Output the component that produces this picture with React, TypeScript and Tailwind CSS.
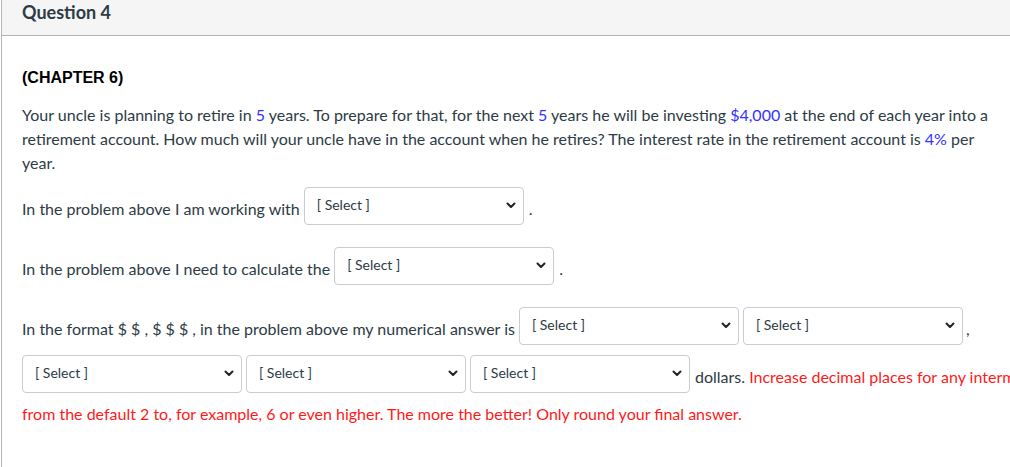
import React from 'react'

const ink = 'text-[#2d3b45]'

const SelectBox = (): React.ReactNode => (
  <div className="flex h-[38px] w-[220px] shrink-0 items-center justify-between rounded-[4px] border border-[#c7cdd1] bg-white pr-[7px] pl-[12px] text-[14px] leading-5 text-[#2d3b45]">
    <span className="-mt-[2px]">[ Select ]</span>
    <svg width="10" height="7" viewBox="0 0 10 7" className="-mt-[1px]">
      <path d="M1.5 1.5 5 5l3.5-3.5" fill="none" stroke="#222" strokeWidth="2" strokeLinecap="round" strokeLinejoin="round" />
    </svg>
  </div>
)

const Blue = ({ children }: { children: React.ReactNode }): React.ReactNode => (
  <span className="text-[#3333ff]">{children}</span>
)

const App = (): React.ReactNode => {
  return (
    <div className="h-[467px] w-[1010px] overflow-hidden bg-white font-['Lato','Noto_Sans',sans-serif]">
      <div className="ml-[1px] h-[467px] w-[1060px] border-l border-[#b5b5b5]">
        <div className="h-[36px] border-b border-[#b5b5b5] bg-[#f5f5f5] px-[20px]">
          <h2 className="text-[18px] leading-6 font-bold text-[#2d3b45]">Question 4</h2>
        </div>

        <div className={`px-[20px] pt-[30px] text-[16px] leading-6 ${ink}`}>
          <p className="font-['Liberation_Sans',Arial,sans-serif] font-bold text-black">(CHAPTER 6)</p>

          <p className="mt-[13px] max-w-[975px]">
            Your uncle is planning to retire in <Blue>5</Blue> years. To prepare for that, for the next <Blue>5</Blue>{' '}
            years he will be investing <Blue>$4,000</Blue> at the end of each year into a retirement account. How much
            will your uncle have in the account when he retires? The interest rate in the retirement account is{' '}
            <Blue>4%</Blue> per year.
          </p>

          <div className="mt-[12px] flex items-center">
            <span className="pt-[5px]">In the problem above I am working with</span>
            <div className="ml-[4px]">
              <SelectBox />
            </div>
            <span className="ml-[5px] pt-[5px]">.</span>
          </div>

          <div className="mt-[22px] flex items-center">
            <span className="pt-[5px]">In the problem above I need to calculate the</span>
            <div className="ml-[4px]">
              <SelectBox />
            </div>
            <span className="ml-[5px] pt-[5px]">.</span>
          </div>

          <div className="mt-[22px] flex items-center">
            <span className="pt-[5px]">In the format $ $ , $ $ $ , in the problem above my numerical answer is</span>
            <div className="ml-[4px] flex gap-[4px]">
              <SelectBox />
              <SelectBox />
            </div>
            <span className="ml-[3px] pt-[5px]">,</span>
          </div>

          <div className="mt-[10px] flex items-center whitespace-nowrap">
            <div className="flex gap-[4px]">
              <SelectBox />
              <SelectBox />
              <SelectBox />
            </div>
            <span className="ml-[5px] pt-[5px]">
              dollars. <span className="text-[#ff1a1a]">Increase decimal places for any intermediate calculations</span>
            </span>
          </div>

          <p className="mt-[9px] text-[#ff1a1a]">
            from the default 2 to, for example, 6 or even higher. The more the better! Only round your final answer.
          </p>
        </div>
      </div>
    </div>
  )
}

export default App
